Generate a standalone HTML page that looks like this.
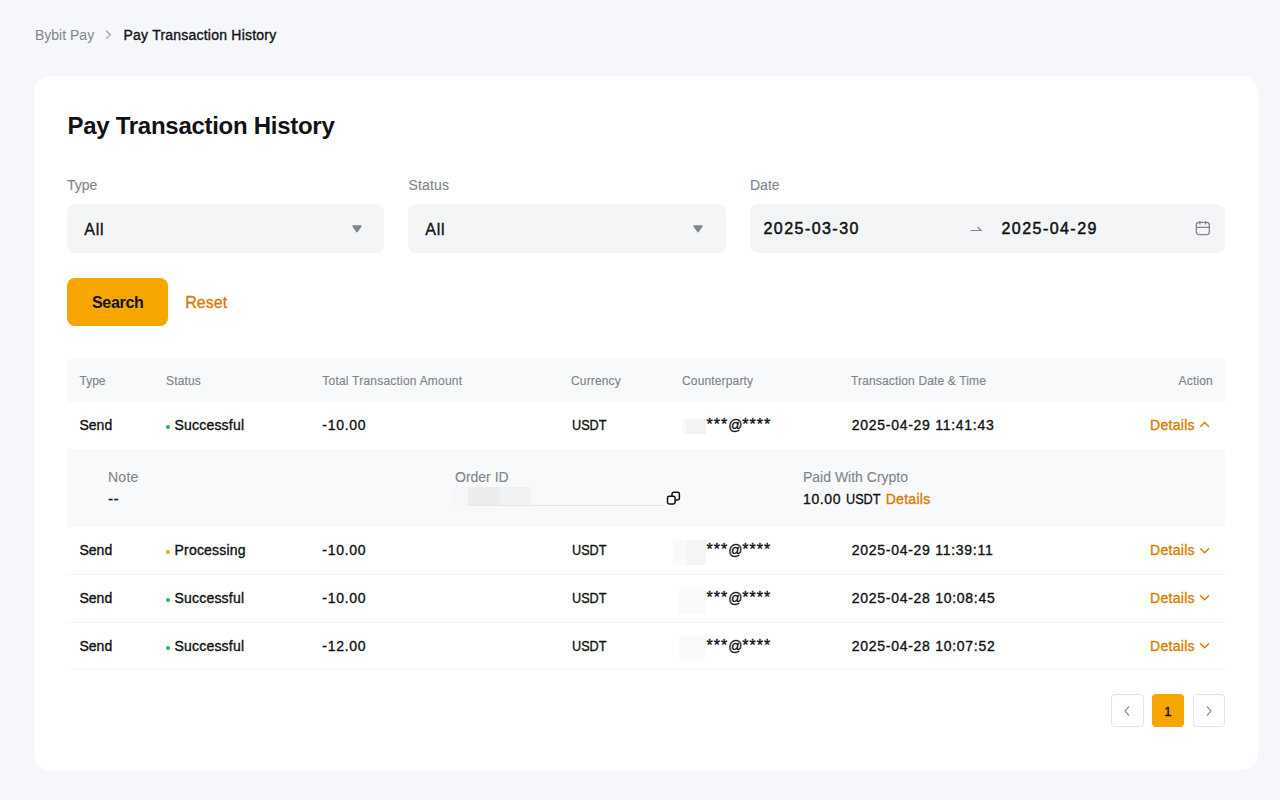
<!DOCTYPE html>
<html><head><meta charset="utf-8">
<style>
*{box-sizing:border-box;margin:0;padding:0}
html,body{width:1280px;height:800px;overflow:hidden}
body{background:#f5f7fa;font-family:"Liberation Sans",sans-serif;color:#121214;position:relative}
.a{position:absolute;white-space:nowrap}
.card{position:absolute;left:34px;top:76px;width:1224px;height:694px;background:#fff;border-radius:16px}
.lbl{font-size:14px;line-height:14px;color:#81858c;-webkit-text-stroke-width:0.12px}
.sel{position:absolute;top:204px;height:49px;background:#f3f5f7;border-radius:8px}
.b{font-weight:700}
.th{font-size:12px;line-height:12px;color:#81858c;-webkit-text-stroke-width:0.15px;letter-spacing:0.15px}
.td{font-size:14px;line-height:14px;color:#121214;-webkit-text-stroke-width:0.35px}
.m{-webkit-text-stroke-width:0.35px}
.org{color:#d47d02}
.dot{position:absolute;width:4.4px;height:4px;border-radius:2.2px}
.line{position:absolute;left:67px;width:1158px;height:1px;background:#f4f5f7}
</style></head><body>
<!-- breadcrumb -->
<div class="a" style="left:35px;top:28.1px;font-size:14px;line-height:14px;color:#81858c">Bybit Pay</div>
<svg class="a" style="left:103px;top:29px" width="10" height="12" viewBox="0 0 10 12"><path d="M3 1.5 L7.4 5.7 L3 9.9" fill="none" stroke="#a0a4ab" stroke-width="1.2"/></svg>
<div class="a m" style="left:123.5px;top:28.1px;font-size:14px;line-height:14px;letter-spacing:0.22px">Pay Transaction History</div>

<div class="card"></div>
<div class="a b" style="left:67.5px;top:113.9px;font-size:24px;line-height:24px;letter-spacing:-0.28px">Pay Transaction History</div>

<!-- filters -->
<div class="a lbl" style="left:67px;top:177.6px">Type</div>
<div class="a lbl" style="left:408.5px;top:177.6px;letter-spacing:0.15px">Status</div>
<div class="a lbl" style="left:750px;top:177.6px">Date</div>

<div class="sel" style="left:67px;width:317px"></div>
<div class="sel" style="left:408px;width:318px"></div>
<div class="sel" style="left:750px;width:475px"></div>
<div class="a m" style="left:84.3px;top:222.2px;font-size:16px;line-height:16px;letter-spacing:0.7px">All</div>
<div class="a m" style="left:425.3px;top:222.2px;font-size:16px;line-height:16px;letter-spacing:0.7px">All</div>
<svg class="a" style="left:351.4px;top:223.5px" width="12" height="10" viewBox="0 0 12 10"><path d="M2.1 2.1 L9.9 2.1 L6 7.6 Z" fill="#81858c" stroke="#81858c" stroke-width="1.7" stroke-linejoin="round"/></svg>
<svg class="a" style="left:692.4px;top:223.5px" width="12" height="10" viewBox="0 0 12 10"><path d="M2.1 2.1 L9.9 2.1 L6 7.6 Z" fill="#81858c" stroke="#81858c" stroke-width="1.7" stroke-linejoin="round"/></svg>
<div class="a" style="left:763.5px;top:221.4px;font-size:16px;line-height:16px;letter-spacing:1.45px;-webkit-text-stroke-width:0.5px">2025-03-30</div>
<div class="a" style="left:1001.5px;top:221.4px;font-size:16px;line-height:16px;letter-spacing:1.45px;-webkit-text-stroke-width:0.5px">2025-04-29</div>
<svg class="a" style="left:968px;top:224px" width="16" height="10" viewBox="0 0 16 10"><path d="M2.5 6.5 L13 6.5 L9.6 2.8" fill="none" stroke="#81858c" stroke-width="1.2"/></svg>
<svg class="a" style="left:1194px;top:219px" width="18" height="18" viewBox="0 0 18 18"><rect x="2.35" y="3.45" width="13" height="12.1" rx="2.6" fill="none" stroke="#81858c" stroke-width="1.3"/><path d="M2.35 8.3 H15.35 M5.9 2 V5.4 M11.6 2 V5.4" stroke="#81858c" stroke-width="1.3"/></svg>

<!-- buttons -->
<div class="a" style="left:67px;top:278px;width:101px;height:48px;background:#f7a600;border-radius:8px"></div>
<div class="a b" style="left:92px;top:295.1px;font-size:16px;line-height:16px;letter-spacing:-0.3px">Search</div>
<div class="a org m" style="left:185.3px;top:295px;font-size:16px;line-height:16px">Reset</div>

<!-- table -->
<div class="a" style="left:67px;top:358.5px;width:1158px;height:43px;background:#f8f9fb"></div>
<div class="a th" style="left:79.5px;top:375.2px;letter-spacing:0">Type</div>
<div class="a th" style="left:166px;top:375.2px">Status</div>
<div class="a th" style="left:322.3px;top:375.2px;letter-spacing:0.22px">Total Transaction Amount</div>
<div class="a th" style="left:571px;top:375.2px">Currency</div>
<div class="a th" style="left:682px;top:375.2px">Counterparty</div>
<div class="a th" style="left:851px;top:375.2px">Transaction Date &amp; Time</div>
<div class="a th" style="left:1178.6px;top:375.2px">Action</div>

<div class="a" style="left:67px;top:449px;width:1158px;height:78px;background:#f8f9fb"></div>
<div class="a td" style="left:79.5px;top:417.7px">Send</div>
<div class="dot" style="left:166px;top:424.5px;background:#20b26c"></div>
<div class="a td" style="left:174.5px;top:417.7px;letter-spacing:0.2px">Successful</div>
<div class="a td" style="left:322.3px;top:417.7px;letter-spacing:0.7px">-10.00</div>
<div class="a td" style="left:571.7px;transform:scaleX(0.905);transform-origin:0 0;top:417.7px">USDT</div>
<div class="a td" style="left:706.4px;top:417.7px;letter-spacing:1.05px"><span style="font-size:16px">***</span><span style="letter-spacing:-0.2px">@</span><span style="font-size:16px">****</span></div>
<div class="a td" style="left:851.8px;top:417.7px;letter-spacing:0.72px">2025-04-29 11:41:43</div>
<div class="a td org" style="left:1150px;top:417.7px;letter-spacing:0.3px">Details</div>
<svg class="a" style="left:1198px;top:420.0px" width="14" height="10" viewBox="0 0 14 10"><path d="M2.3 6.8 L6.6 2.6 L10.9 6.8" fill="none" stroke="#d47d02" stroke-width="1.4"/></svg>
<div class="a td" style="left:79.5px;top:543.3px">Send</div>
<div class="dot" style="left:166px;top:550.1px;background:#f7a600"></div>
<div class="a td" style="left:174.5px;top:543.3px;letter-spacing:0.2px">Processing</div>
<div class="a td" style="left:322.3px;top:543.3px;letter-spacing:0.7px">-10.00</div>
<div class="a td" style="left:571.7px;transform:scaleX(0.905);transform-origin:0 0;top:543.3px">USDT</div>
<div class="a td" style="left:706.4px;top:543.3px;letter-spacing:1.05px"><span style="font-size:16px">***</span><span style="letter-spacing:-0.2px">@</span><span style="font-size:16px">****</span></div>
<div class="a td" style="left:851.8px;top:543.3px;letter-spacing:0.72px">2025-04-29 11:39:11</div>
<div class="a td org" style="left:1150px;top:543.3px;letter-spacing:0.3px">Details</div>
<svg class="a" style="left:1198px;top:545.6px" width="14" height="10" viewBox="0 0 14 10"><path d="M2.3 2.5 L6.6 6.8 L10.9 2.5" fill="none" stroke="#d47d02" stroke-width="1.4"/></svg>
<div class="a td" style="left:79.5px;top:591.0px">Send</div>
<div class="dot" style="left:166px;top:597.8px;background:#20b26c"></div>
<div class="a td" style="left:174.5px;top:591.0px;letter-spacing:0.2px">Successful</div>
<div class="a td" style="left:322.3px;top:591.0px;letter-spacing:0.7px">-10.00</div>
<div class="a td" style="left:571.7px;transform:scaleX(0.905);transform-origin:0 0;top:591.0px">USDT</div>
<div class="a td" style="left:706.4px;top:591.0px;letter-spacing:1.05px"><span style="font-size:16px">***</span><span style="letter-spacing:-0.2px">@</span><span style="font-size:16px">****</span></div>
<div class="a td" style="left:851.8px;top:591.0px;letter-spacing:0.72px">2025-04-28 10:08:45</div>
<div class="a td org" style="left:1150px;top:591.0px;letter-spacing:0.3px">Details</div>
<svg class="a" style="left:1198px;top:593.3px" width="14" height="10" viewBox="0 0 14 10"><path d="M2.3 2.5 L6.6 6.8 L10.9 2.5" fill="none" stroke="#d47d02" stroke-width="1.4"/></svg>
<div class="a td" style="left:79.5px;top:638.8px">Send</div>
<div class="dot" style="left:166px;top:645.6px;background:#20b26c"></div>
<div class="a td" style="left:174.5px;top:638.8px;letter-spacing:0.2px">Successful</div>
<div class="a td" style="left:322.3px;top:638.8px;letter-spacing:0.7px">-12.00</div>
<div class="a td" style="left:571.7px;transform:scaleX(0.905);transform-origin:0 0;top:638.8px">USDT</div>
<div class="a td" style="left:706.4px;top:638.8px;letter-spacing:1.05px"><span style="font-size:16px">***</span><span style="letter-spacing:-0.2px">@</span><span style="font-size:16px">****</span></div>
<div class="a td" style="left:851.8px;top:638.8px;letter-spacing:0.72px">2025-04-28 10:07:52</div>
<div class="a td org" style="left:1150px;top:638.8px;letter-spacing:0.3px">Details</div>
<svg class="a" style="left:1198px;top:641.1px" width="14" height="10" viewBox="0 0 14 10"><path d="M2.3 2.5 L6.6 6.8 L10.9 2.5" fill="none" stroke="#d47d02" stroke-width="1.4"/></svg>
<div class="line" style="top:573.5px"></div>
<div class="line" style="top:621.5px"></div>
<div class="line" style="top:669.1px"></div>
<div class="a lbl" style="left:108px;top:470px;letter-spacing:0.25px">Note</div>
<div class="a td" style="left:108.3px;top:491.7px;letter-spacing:0.8px">--</div>
<div class="a lbl" style="left:455px;top:470px">Order ID</div>
<div class="a" style="left:451px;top:486.5px;width:17px;height:19px;background:#f6f7f9"></div>
<div class="a" style="left:467.5px;top:486.5px;width:31px;height:19px;background:#ebecee"></div>
<div class="a" style="left:498.5px;top:486.5px;width:31px;height:19px;background:#f0f1f3"></div>
<div class="a" style="left:467.5px;top:504.5px;width:196px;height:1.2px;background:#e6e7e9"></div>
<svg class="a" style="left:664px;top:489px" width="18" height="18" viewBox="0 0 18 18"><rect x="8.0" y="3.3" width="7.4" height="7.6" rx="1.7" fill="#f8f9fb" stroke="#121214" stroke-width="1.5"/><rect x="3.5" y="7.3" width="7.6" height="7.6" rx="1.7" fill="#f8f9fb" stroke="#121214" stroke-width="1.5"/></svg>
<div class="a lbl" style="left:803px;top:470px">Paid With Crypto</div>
<div class="a td" style="left:803px;top:491.7px;letter-spacing:0.6px">10.00</div><div class="a td" style="left:846.2px;top:491.7px;transform:scaleX(0.905);transform-origin:0 0">USDT</div><div class="a td org" style="left:885.7px;top:491.7px;letter-spacing:0.3px">Details</div>
<div class="a" style="left:682px;top:419px;width:4px;height:15px;background:#f9f9fa"></div><div class="a" style="left:686px;top:419px;width:19.5px;height:15px;background:#f3f3f4"></div>
<div class="a" style="left:672.5px;top:540px;width:14px;height:24.5px;background:#fafafa"></div>
<div class="a" style="left:686px;top:540px;width:20px;height:24.5px;background:#f5f5f6"></div>
<div class="a" style="left:677.5px;top:589px;width:28.5px;height:25px;background:#fafafb"></div>
<div class="a" style="left:679px;top:636px;width:27px;height:23px;background:#fafafb"></div>
<div class="a" style="left:1111px;top:694px;width:33px;height:33px;border:1px solid #e3e5e9;border-radius:4px"></div>
<svg class="a" style="left:1120px;top:702.5px" width="14" height="16" viewBox="0 0 14 16"><path d="M9 3.5 L5 8 L9 12.5" fill="none" stroke="#8e9299" stroke-width="1.2"/></svg>
<div class="a" style="left:1151.7px;top:694px;width:32.5px;height:33px;background:#f7a600;border-radius:4px"></div>
<div class="a m" style="left:1151.7px;top:704.5px;width:32.5px;text-align:center;font-size:13px;line-height:13px">1</div>
<div class="a" style="left:1193px;top:694px;width:32px;height:33px;border:1px solid #e3e5e9;border-radius:4px"></div>
<svg class="a" style="left:1202px;top:702.5px" width="14" height="16" viewBox="0 0 14 16"><path d="M5 3.5 L9 8 L5 12.5" fill="none" stroke="#8e9299" stroke-width="1.2"/></svg>
</body></html>
